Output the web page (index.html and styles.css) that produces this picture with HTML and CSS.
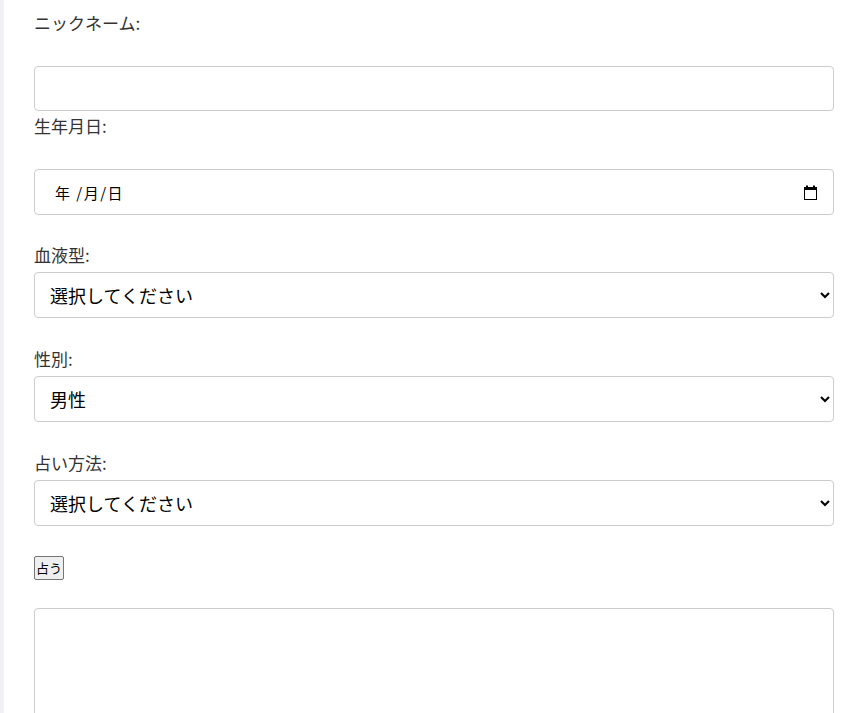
FILE: index.html
```html
<!DOCTYPE html>
<html lang="ja">
<head>
<meta charset="utf-8">
<title>占い</title>
<link rel="stylesheet" href="styles.css">
</head>
<body>
<div class="container">
  <form class="form">
    <label class="label label-top" for="nickname">ニックネーム:</label>
    <input class="field field-text" id="nickname" type="text">
    <label class="label label-top" for="birthday">生年月日:</label>
    <div class="field field-date" id="birthday">
      <span class="date-text">年 /月/日</span>
      <svg class="cal-icon" width="15" height="15" viewBox="0 0 15 15" aria-hidden="true">
        <rect x="1" y="2" width="13" height="3" fill="#000"/>
        <rect x="3" y="0.5" width="2" height="2" fill="#000"/>
        <rect x="10" y="0.5" width="2" height="2" fill="#000"/>
        <rect x="1.5" y="4" width="12" height="10.5" fill="none" stroke="#000" stroke-width="1"/>
      </svg>
    </div>
    <label class="label" for="blood">血液型:</label>
    <select class="field field-select" id="blood">
      <option>選択してください</option>
      <option>A型</option>
      <option>B型</option>
      <option>O型</option>
      <option>AB型</option>
    </select>
    <label class="label" for="gender">性別:</label>
    <select class="field field-select" id="gender">
      <option>男性</option>
      <option>女性</option>
    </select>
    <label class="label" for="method">占い方法:</label>
    <select class="field field-select" id="method">
      <option>選択してください</option>
    </select>
    <div class="button-row"><button type="button" class="btn">占う</button></div>
    <textarea class="field field-area"></textarea>
  </form>
</div>
</body>
</html>
```

FILE: styles.css
```css
html, body {
  margin: 0;
  padding: 0;
}
body {
  background: #f0f2f5;
  font-family: "Noto Sans CJK JP", "Noto Sans", sans-serif;
  overflow: hidden;
}
.container {
  margin-left: 4px;
  background: #ffffff;
  padding: 12px 7px 0 30px;
  min-height: 800px;
}
.form {
  display: flex;
  flex-direction: column;
  align-items: stretch;
}
.label {
  display: block;
  font-size: 17px;
  line-height: 22px;
  color: #333333;
  margin: 30px 0 6px;
}
.label-top {
  margin: 4px 0 32px;
}
.form > .label:first-child {
  margin-top: 0;
}
.field {
  box-sizing: border-box;
  width: 100%;
  border: 1px solid #cccccc;
  border-radius: 4px;
  background: #ffffff;
  margin: 0;
  font-family: "Noto Sans CJK JP", "Noto Sans", sans-serif;
}
.field-text {
  height: 45px;
  padding: 0 10px;
  font-size: 16px;
}
.field-date {
  height: 46px;
  display: flex;
  align-items: center;
  justify-content: space-between;
  padding: 0 15px 0 20px;
  margin-bottom: -1px;
}
.date-text {
  font-size: 15px;
  letter-spacing: 1.5px;
  color: #000;
}
.cal-icon {
  display: block;
}
.field-select {
  height: 46px;
  padding: 0 6px 0 11px;
  font-size: 18px;
  color: #000;
}
.button-row {
  margin-top: 30px;
  display: flex;
}
.btn {
  font-family: "Noto Sans CJK JP", sans-serif;
  font-size: 13px;
  line-height: 20px;
  padding: 1px 1px;
  border: 1px solid #767676;
  border-radius: 2px;
  background: #efefef;
  color: #000;
}
.field-area {
  margin-top: 28px;
  height: 160px;
  resize: none;
}
```
